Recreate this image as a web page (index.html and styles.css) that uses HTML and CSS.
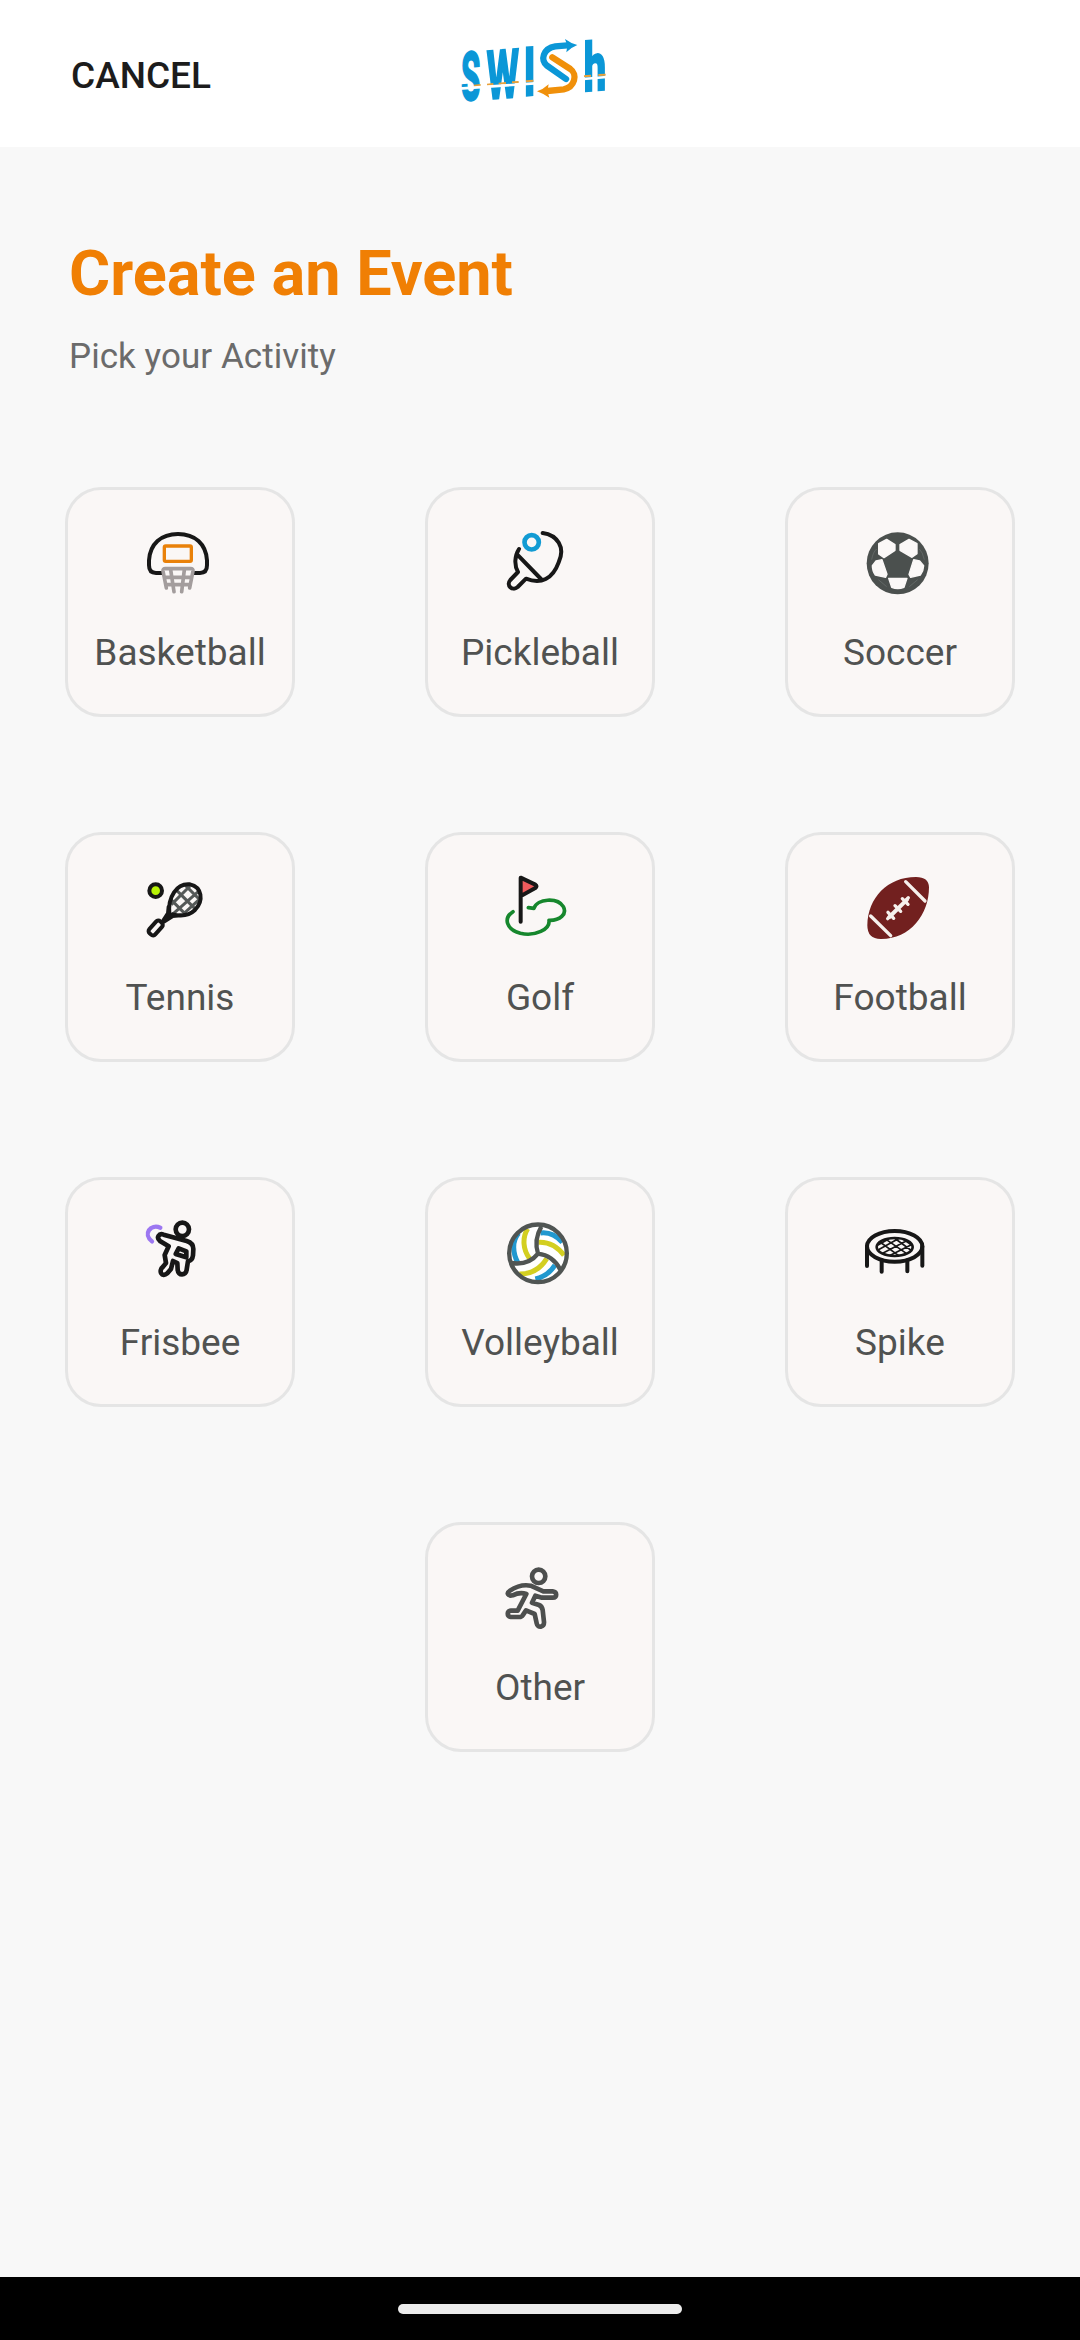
FILE: index.html
```html
<!DOCTYPE html>
<html lang="en">
<head>
<meta charset="utf-8">
<title>Create an Event</title>
<link rel="stylesheet" href="styles.css">
</head>
<body>
<div class="screen">
  <header class="topbar">
    <button class="cancel">CANCEL</button>
    <svg class="logo" viewBox="0 0 570 381" role="img" aria-label="swish">
      <g class="logo-letters">
        <text transform="translate(92 239) skewY(-4.5) scale(.46 1)">S</text>
        <text transform="translate(188 233) skewY(-4.5) scale(.55 1)">W</text>
        <text transform="translate(269 225) skewY(-4.5) scale(.6 1)">I</text>
        <text transform="translate(465 210) skewY(-4.5) scale(.6 .99)">h</text>
      </g>
      <path class="stripe" d="M102 197L122 195M141 194L160 192M176 191L198 189M216 187L236 186M258 184L280 182M432 169L453 167M475 165L497 164"/>
      <path class="stripe-gap" d="M58 206L284 190M430 177L500 171"/>
      <g fill="none" stroke-width="19" stroke-linecap="round">
        <path stroke="#0b97d7" d="M378 177L321 137C300 121 309 85 346 79L382 76"/>
        <path stroke="#f0900a" d="M337 112L391 147C414 163 404 202 371 208L322 213"/>
      </g>
      <path fill="#0b97d7" d="M375 57Q391 69 412 75Q394 82 379 97L382 77Z"/>
      <path fill="#f0900a" d="M326 193Q310 208 291 214Q310 221 328 233L322 213Z"/>
    </svg>
  </header>
  <main class="content">
    <h1 class="title">Create an Event</h1>
    <p class="subtitle">Pick your Activity</p>
    <div class="activities">
      <button class="card">
        <svg class="icon" viewBox="0 0 300 300">
          <path class="ink" d="M96 174H78Q57 174 57 151V136C60 87 93 57 144 57S228 87 231 136V151Q231 174 210 174H192"/>
          <rect x="103" y="93" width="81" height="46" rx="4" fill="none" stroke="#e98109" stroke-width="10"/>
          <g fill="none" stroke="#a39d9d" stroke-width="11" stroke-linecap="round" stroke-linejoin="round">
            <path d="M109 219L99 168Q98 161 106 161H182Q190 161 189 168L179 219M122 164L132 230M163 164L155 230M104 187H184M108 209H181"/>
          </g>
        </svg>
        <span class="label">Basketball</span>
      </button>
      <button class="card">
        <svg class="icon" viewBox="0 0 300 300">
          <g transform="translate(0 -15)">
            <path class="ink" d="M158 69C202 75 227 112 206 157C188 207 153 224 108 206L83 231C67 245 47 226 61 210L84 186C72 166 74 137 87 117M82 134L153 207"/>
            <circle cx="125" cy="97" r="21.500" fill="none" stroke="#129bd3" stroke-width="14"/>
          </g>
        </svg>
        <span class="label">Pickleball</span>
      </button>
      <button class="card">
        <svg class="icon" viewBox="0 0 300 300">
          <circle cx="143" cy="145" r="93" fill="#4b504e"/>
          <g fill="#fbf8f7" stroke="#fbf8f7" stroke-width="4" stroke-linejoin="round">
            <path d="M86 86L110 73L135 89V106L102 128L86 117Z"/>
            <path d="M201 86L177 73L150 89V106L186 127L201 116Z"/>
            <path d="M67 152L78 138L96 134L111 178L107 187L76 180Q67 168 67 152Z"/>
            <path d="M221 152L209 138L191 134L177 178L182 187L211 180Q221 166 221 152Z"/>
            <path d="M116 190H171L162 217Q143 224 125 217Z"/>
          </g>
          <path d="M65 134Q69 111 80 102M223 134Q218 111 208 102M85 194L110 215M203 194L178 215" fill="none" stroke="#6d7371" stroke-width="2"/>
        </svg>
        <span class="label">Soccer</span>
      </button>
      <button class="card">
        <svg class="icon" viewBox="0 0 300 300">
          <g fill="none" stroke="#555958" stroke-width="9">
            <path d="M120 116L164 160M137 88L194 145M164 74L210 120M124 134L180 78M124 166L208 92M160 162L208 118"/>
          </g>
          <path class="ink" d="M118 162C113 111 140 69 180 73C216 81 222 121 195 150C176 168 152 169 128 163M116 140L114 160L98 185M153 166L128 168L102 185"/>
          <rect x="-12" y="-24" width="24" height="48" rx="9" class="ink" transform="translate(77 204) rotate(42)"/>
          <circle cx="77" cy="92" r="19" class="ink ball"/>
        </svg>
        <span class="label">Tennis</span>
      </button>
      <button class="card">
        <svg class="icon" viewBox="0 0 300 300">
          <path fill="none" stroke="#16872d" stroke-width="11" stroke-linecap="round" stroke-linejoin="round" d="M69 155C39 175 49 208 91 220C136 230 181 208 177 181C210 182 232 162 220 140C203 112 141 115 132 145L115 143"/>
          <path d="M92 53L136 74Q143 79 136 84L92 109Z" fill="#ef5b5d"/>
          <path class="ink" d="M92 185V53L136 74Q143 79 136 84L94 107"/>
        </svg>
        <span class="label">Golf</span>
      </button>
      <button class="card">
        <svg class="icon" viewBox="0 0 300 300">
          <path fill="#72201f" d="M52 196C54 113 112 51 198 51Q236 51 237 82C237 164 181 237 94 237Q52 238 52 196Z"/>
          <g fill="none" stroke="#f6f0ec" stroke-linecap="round">
            <path stroke-width="10" d="M167 65L225 123M62 168L122 227"/>
            <path stroke-width="12" d="M118 171L171 119"/>
            <path stroke-width="10" d="M114 157L131 175M135 137L152 154M157 116L174 133M113 176L121 168M168 121L175 113"/>
          </g>
        </svg>
        <span class="label">Football</span>
      </button>
      <button class="card">
        <svg class="icon" viewBox="0 0 300 300">
          <path d="M91 68C61 56 38 87 66 109" fill="none" stroke="#9c77f1" stroke-width="13" stroke-linecap="round"/>
          <g class="ink bold">
            <circle cx="157" cy="73" r="20"/>
            <path d="M101 89L170 108Q190 114 190 132L189 151Q187 168 174 168L170 194C168 213 144 213 143 194L142 174L129 168L123 192L112 205C96 219 83 198 100 184L108 174L104 150L116 124L91 109C77 98 87 84 101 89Z"/>
            <path d="M146 130L169 139V157L137 147Z"/>
          </g>
        </svg>
        <span class="label">Frisbee</span>
      </button>
      <button class="card">
        <svg class="icon" viewBox="0 0 300 300">
          <circle cx="144" cy="145" r="88" fill="#fff"/>
          <g fill="none" stroke="#2198cf" stroke-width="15">
            <path d="M86 84C65 108 68 145 84 174M151 84Q188 79 217 112M136 222Q175 213 195 180"/>
          </g>
          <g fill="none" stroke="#d3cf21" stroke-width="15">
            <path d="M113 71C96 99 99 135 119 161M145 112Q190 109 222 151M88 207Q141 208 170 161"/>
          </g>
          <g fill="none" stroke="#505553" stroke-width="13">
            <circle cx="144" cy="145" r="86.500"/>
            <path d="M154 65Q131 104 144 146Q189 151 211 194M144 146Q116 182 63 174"/>
          </g>
        </svg>
        <span class="label">Volleyball</span>
      </button>
      <button class="card">
        <svg class="icon" viewBox="0 0 300 300">
          <g class="ink">
            <ellipse cx="134" cy="124" rx="83" ry="46"/>
            <path d="M51 124V183M217 124V182M95 166V200M172 166V199"/>
            <ellipse class="thin" cx="134" cy="126" rx="54" ry="27"/>
            <path class="mesh" d="M90 111L145 151M108 103L169 145M133 99L182 135M161 104L186 121M84 120L116 102M84 135L145 101M98 145L170 107M121 151L184 119"/>
          </g>
        </svg>
        <span class="label">Spike</span>
      </button>
      <button class="card last">
        <svg class="icon" viewBox="0 0 300 300">
          <g class="ink bold gray">
            <circle cx="146" cy="79" r="20"/>
            <path d="M60 122Q91 101 122 107L160 124H188C202 126 202 142 188 143H156L136 137L126 158L147 165Q156 169 158 180L162 216C163 232 143 236 140 220L134 192L108 181L98 196Q95 201 88 201H63C50 199 50 183 63 182H83L109 132Q90 125 68 136C54 139 48 130 60 122Z"/>
          </g>
        </svg>
        <span class="label">Other</span>
      </button>
    </div>
  </main>
  <footer class="navbar"><span class="handle"></span></footer>
</div>
</body>
</html>
```
FILE: styles.css
```css
* { box-sizing: border-box; }
body {
  margin: 0;
  font-family: Roboto, "Liberation Sans", sans-serif;
  background: #f8f8f8;
}
button {
  font: inherit;
  border: 0;
  padding: 0;
  background: none;
}
.screen {
  width: 1080px;
  height: 2340px;
  display: flex;
  flex-direction: column;
}
.topbar {
  height: 147px;
  display: flex;
  background: #fff;
}
.cancel {
  width: 369px;
  height: 150px;
  margin-left: 71px;
  text-align: left;
  font-size: 37px;
  font-weight: 500;
  color: #1c1c1c;
}
.logo { width: 190px; height: 127px; margin-top: 20px; }
.logo-letters {
  font-family: Roboto, sans-serif;
  font-size: 200px;
  font-weight: 700;
  fill: #0b97d7;
  stroke: #0b97d7;
  stroke-width: 8px;
  text-anchor: middle;
}
.stripe { stroke: #e9a13a; stroke-width: 6px; }
.stripe-gap { stroke: #fff; stroke-width: 8px; }
.content { flex: 1; padding: 90px 65px 0; }
.title {
  margin: 0 0 0 4px;
  font-size: 63px;
  line-height: 74px;
  font-weight: 700;
  color: #f07f04;
}
.subtitle {
  margin: 25px 0 0 4px;
  font-size: 35px;
  line-height: 42px;
  letter-spacing: 0.05px;
  color: #6b6b6b;
}
.activities {
  margin-top: 109px;
  display: grid;
  grid-template-columns: repeat(3, 230px);
  column-gap: 130px;
  row-gap: 115px;
}
.card {
  height: 230px;
  border: 3px solid #e5e5e5;
  border-radius: 36px;
  background: #faf7f6;
  display: flex;
  flex-direction: column;
  align-items: center;
  padding-top: 25px;
}
.last { grid-column: 2; }
.icon { width: 100px; height: 100px; flex: none; }
.label {
  font-size: 37px;
  line-height: 76px;
  color: #505251;
  white-space: nowrap;
}
.ink {
  fill: none;
  stroke: #171717;
  stroke-width: 12px;
  stroke-linecap: round;
  stroke-linejoin: round;
}
.bold { stroke-width: 14px; }
.gray { stroke: #4d4f4e; }
.ball { fill: #b7f305; }
.thin { stroke-width: 8px; }
.mesh { stroke-width: 5px; }
.navbar {
  height: 63px;
  background: #000;
  display: flex;
  align-items: center;
  justify-content: center;
}
.handle { width: 284px; height: 10px; border-radius: 5px; background: #ececec; }
```
